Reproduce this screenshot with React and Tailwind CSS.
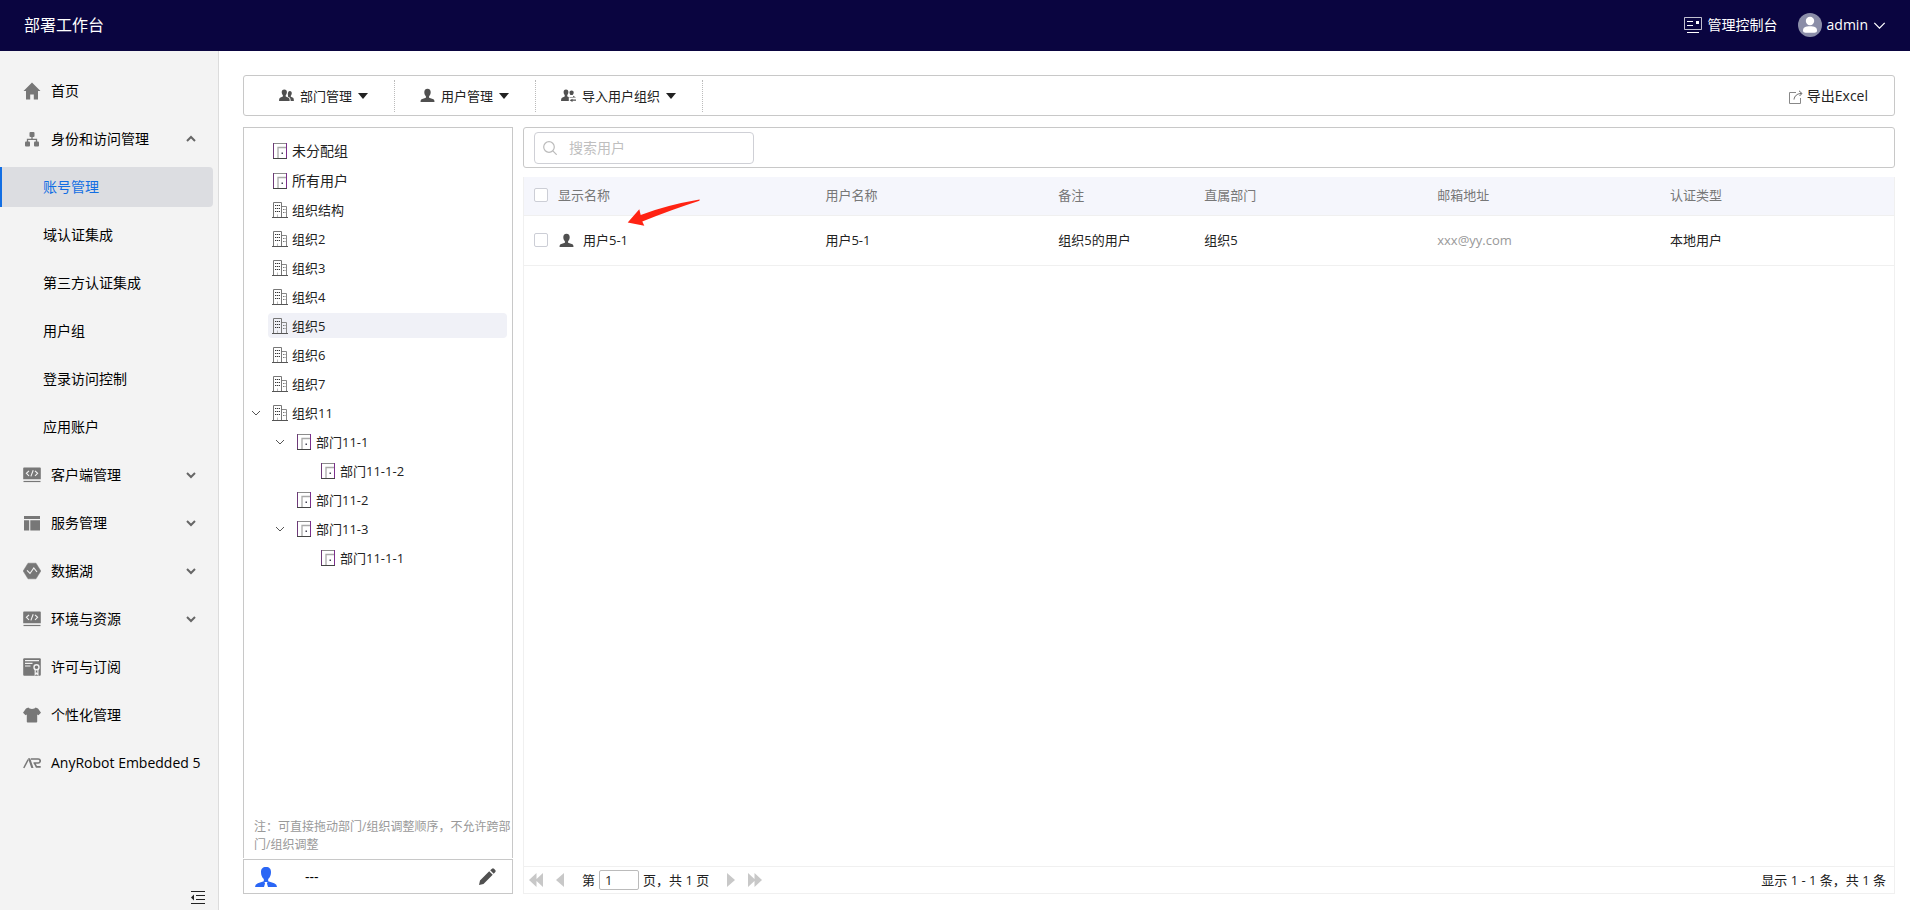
import React from 'react';
import clsx from 'clsx';

const navItems = [
  { label: '首页', icon: HomeIcon },
  {
    label: '身份和访问管理',
    icon: OrgChartIcon,
    open: true,
    children: ['账号管理', '域认证集成', '第三方认证集成', '用户组', '登录访问控制', '应用账户'],
  },
  { label: '客户端管理', icon: CodeIcon, open: false },
  { label: '服务管理', icon: LayoutIcon, open: false },
  { label: '数据湖', icon: HexIcon, open: false },
  { label: '环境与资源', icon: CodeIcon, open: false },
  { label: '许可与订阅', icon: LicenseIcon },
  { label: '个性化管理', icon: ShirtIcon },
  { label: 'AnyRobot Embedded 5', icon: ArIcon },
];

const treeItems = [
  { label: '组织结构', type: 'org' },
  { label: '组织2', type: 'org' },
  { label: '组织3', type: 'org' },
  { label: '组织4', type: 'org' },
  { label: '组织5', type: 'org', selected: true },
  { label: '组织6', type: 'org' },
  { label: '组织7', type: 'org' },
  { label: '组织11', type: 'org', open: true },
  { label: '部门11-1', type: 'dept', level: 1, open: true },
  { label: '部门11-1-2', type: 'dept', level: 2 },
  { label: '部门11-2', type: 'dept', level: 1 },
  { label: '部门11-3', type: 'dept', level: 1, open: true },
  { label: '部门11-1-1', type: 'dept', level: 2 },
];

const indents = ['pl-0', 'pl-6', 'pl-12'];

const users = [
  { name: '用户5-1', account: '用户5-1', remark: '组织5的用户', dept: '组织5', mail: 'xxx@yy.com', auth: '本地用户' },
];

/* Icons */
function HomeIcon() {
  return (
    <svg width="18" height="18" viewBox="0 0 18 18" fill="currentColor">
      <path d="M9 .5 17.500 9H15v8.500h-4.200v-5H7.200v5H3V9H.5z" />
    </svg>
  );
}

function OrgChartIcon() {
  return (
    <svg width="18" height="18" viewBox="0 0 18 18" fill="currentColor">
      <rect x="6.5" y="2" width="5" height="5" rx="1" />
      <rect x="2" y="11.5" width="5" height="5" rx="1" />
      <rect x="11" y="11.5" width="5" height="5" rx="1" />
      <path d="M9 6v3.300M4.500 12V9.300h9V12" fill="none" stroke="currentColor" strokeWidth="1.3" />
    </svg>
  );
}

function CodeIcon() {
  return (
    <svg width="18" height="18" viewBox="0 0 18 18">
      <path d="M1 1.500h16a.8.8 0 0 1 .8.8v11H.2v-11a.8.8 0 0 1 .8-.8z" fill="currentColor" />
      <path d="M.5 15.500h17" stroke="currentColor" strokeWidth="1.2" />
      <path d="M6 4.800 3.400 7.300 6 9.800M12 4.800l2.600 2.500L12 9.800M10.200 4.200 7.900 10.400" fill="none" stroke="#f3f3f3" strokeWidth="1.1" />
    </svg>
  );
}

function LayoutIcon() {
  return (
    <svg width="18" height="18" viewBox="0 0 18 18" fill="currentColor">
      <path d="M1 2h16v3H1zM1 6.300h5.200v10.200H1zM7.300 6.300H17v10.200H7.300z" />
    </svg>
  );
}

function HexIcon() {
  return (
    <svg width="18" height="18" viewBox="0 0 18 18">
      <path d="M5 1.200h8L17.800 9 13 16.800H5L.2 9z" fill="currentColor" stroke="currentColor" strokeLinejoin="round" strokeWidth=".5" />
      <path d="M4 8.400 7 11.500l3.800-5.500 3.200 4" fill="none" stroke="#f3f3f3" strokeWidth="1.1" />
    </svg>
  );
}

function LicenseIcon() {
  return (
    <svg width="18" height="18" viewBox="0 0 18 18">
      <rect x=".2" y=".2" width="17.6" height="17.6" rx="1" fill="currentColor" />
      <path d="M2 2.600h14M2 5.400h7.500M2 8h5.500" stroke="#f3f3f3" strokeWidth="1.1" />
      <circle cx="13.5" cy="9.2" r="2.5" fill="none" stroke="#f3f3f3" strokeWidth="1.4" />
      <path d="M12.200 11.300v5.200l1.300-1.300 1.400 1.300v-5.200" fill="none" stroke="#f3f3f3" strokeWidth="1.2" />
    </svg>
  );
}

function ShirtIcon() {
  return (
    <svg width="18" height="18" viewBox="0 0 18 18" fill="currentColor">
      <path d="M5.400 1.600C6.200 3.500 11.800 3.500 12.600 1.600L15 2.400 18 6.800l-2.600 2.400-1.200-.7v7.300q0 .8-.8.8H4.600q-.8 0-.8-.8V8.500l-1.200.7L0 6.800l3-4.400z" />
    </svg>
  );
}

function ArIcon() {
  return (
    <svg width="18" height="18" viewBox="0 0 18 18" fill="none" stroke="currentColor">
      <path d="M.8 14 5.200 5.500" strokeWidth="1.5" />
      <path d="M5 4.300h2.200L10.500 14H8.300z" fill="currentColor" stroke="none" />
      <path d="M8 5h7.200q2 0 2 1.900T15.200 9H10.500M11.500 9.200l2 3.600h4.200" strokeWidth="1.7" />
    </svg>
  );
}

function Chevron({ up, className, size = 10, stroke = 2 }) {
  return (
    <svg className={className} width={size} height={size} viewBox="0 0 10 10" fill="none" stroke="currentColor" strokeWidth={stroke}>
      <path d={up ? 'M1 7l4-4 4 4' : 'M1 3l4 4 4-4'} />
    </svg>
  );
}

function PersonIcon({ className }) {
  return (
    <svg className={className} width="15" height="15" viewBox="0 0 15 15" fill="currentColor">
      <path d="M7.500.8c2.200 0 3.300 1.500 3.200 3.600-.1 1.700-.8 3-1.600 3.800v1.600l4.400 1.500q1 .5 1 2.700H.5q0-2.200 1-2.700l4.400-1.500V8.200C5.100 7.400 4.400 6.100 4.300 4.400 4.200 2.300 5.300.8 7.500.8z" />
    </svg>
  );
}

function GroupIcon() {
  return (
    <svg width="15" height="15" viewBox="0 0 15 15" fill="currentColor">
      <path d="M5.300 1.500c1.800 0 2.700 1.200 2.600 2.800C7.800 5.700 7.300 6.700 6.700 7.300v1.300l3 1.200q1 .5 1 3.200H0q0-2.700 1-3.200l2.900-1.200V7.300C3.300 6.700 2.800 5.700 2.700 4.300 2.600 2.700 3.500 1.500 5.300 1.500z" />
      <path d="M10.700 3c1.500 0 2.200 1 2.100 2.300-.1 1.100-.5 1.900-1 2.400v1.100l2.300 1q.8.500.8 3.200h-3.200q0-3-1.400-3.700L9 8.700V7.200C8.700 6.500 8.800 3 10.700 3z" />
    </svg>
  );
}

function ImportGroupIcon() {
  return (
    <svg width="15" height="15" viewBox="0 0 15 15" fill="currentColor">
      <path d="M5 1.500c1.700 0 2.500 1.200 2.400 2.700C7.300 5.500 6.800 6.500 6.300 7v1.400l1.500.7V13H0q0-2.800 1-3.300l2.700-1.300V7C3.200 6.500 2.700 5.500 2.600 4.200 2.500 2.700 3.300 1.500 5 1.500z" />
      <path d="M10.600 2.500c1.600 0 2.200 1 2.100 2.200q-.1 1.500-1.100 2.300H9.500q-.9-.8-1-2.300c-.1-1.200.5-2.200 2.100-2.200zM8.500 9h3.600V7.700L15 9.600H8.500zM15 11.600H11.500v-.9L8.600 12.300l2.900 1.700v-1.200H15z" />
    </svg>
  );
}

function DoorIcon() {
  return (
    <svg width="16" height="16" viewBox="0 0 16 16" fill="none">
      <path d="M1.500 15.500V.5h13" stroke="#8c8c8c" />
      <path d="M14.500 0v15.500" stroke="#7b2f8c" />
      <path d="M1.500 0v15.500" stroke="#6d3a78" />
      <path d="M1 15.500h14" stroke="#444" />
      <path d="M6 15V4.500h8" stroke="#aaa" strokeWidth="1.3" />
      <path d="M9.500 9.500h1.500v1.500H9.500z" fill="#445" />
    </svg>
  );
}

function BuildingIcon() {
  return (
    <svg width="16" height="16" viewBox="0 0 16 16" fill="none">
      <path d="M1.500 15V.5h8V15" stroke="#777" />
      <path d="M10 4.500h4.500V15" stroke="#888" />
      <path d="M0 15.500h16" stroke="#555" />
      <path d="M3 3.500h5M3 6.500h5M3 9.500h5" stroke="#333" strokeDasharray="1.3 .7" />
      <path d="M11 7.500h2.500M11 10.500h2.500" stroke="#777" strokeDasharray="1.5 .5" />
      <path d="M5.500 12.500V15" stroke="#bbb" />
    </svg>
  );
}

function Header() {
  return (
    <header className="flex h-[51px] shrink-0 items-center justify-between bg-[#0a0540] px-6 pb-px text-white">
      <h1 className="text-base leading-6">部署工作台</h1>
      <div className="flex items-center gap-5">
        <button type="button" className="flex items-center gap-[6px] text-sm leading-5">
          <svg width="18" height="18" viewBox="0 0 18 18" fill="none" stroke="currentColor">
            <path d="M.5 1.500h17v12H.5z" strokeOpacity=".75" />
            <path d="M3 5.500h6M3 9.500h6M3 16.500h12" strokeWidth="1.2" />
            <path d="M12 5h3v3h-3z" fill="currentColor" stroke="none" />
          </svg>
          管理控制台
        </button>
        <button type="button" className="flex items-center gap-[5px] text-sm leading-5">
          <svg width="24" height="24" viewBox="0 0 24 24">
            <circle cx="12" cy="12" r="12" fill="#8b8ea8" />
            <circle cx="12" cy="8" r="4.2" fill="#fff" />
            <path d="M5 17.500c0-3.200 2.500-4.300 7-4.300s7 1.100 7 4.300c0 1.700-1 2.200-2.500 2.200h-9C6 19.700 5 19.200 5 17.500z" fill="#fff" />
          </svg>
          admin
          <Chevron size={13} stroke={1} />
        </button>
      </div>
    </header>
  );
}

function Sidebar() {
  return (
    <aside className="flex w-[219px] shrink-0 flex-col justify-between border-r border-[#dcdcdc] bg-[#f3f3f3] pt-4 text-sm leading-5 text-black">
      <nav>
        {navItems.map((item) => {
          const Icon = item.icon;
          return (
            <div key={item.label}>
              <a href="#" className="flex h-12 items-center pl-[23px] pr-[22px]">
                <span className="text-[#777]">
                  <Icon />
                </span>
                <span className="ml-[10px] flex-1 whitespace-nowrap">{item.label}</span>
                {item.open !== undefined && <Chevron up={item.open} className="text-[#666]" />}
              </a>
              {item.children && (
                <div className="flex flex-col gap-2 py-1 pr-[5px]">
                  {item.children.map((child, index) => (
                    <a
                      key={child}
                      href="#"
                      className={clsx(
                        'flex h-10 items-center rounded-r-sm border-l-2 pl-[41px]',
                        index === 0 ? 'border-[#126ee3] bg-[#dcdde1] text-[#126ee3]' : 'border-transparent'
                      )}
                    >
                      {child}
                    </a>
                  ))}
                </div>
              )}
            </div>
          );
        })}
      </nav>
      <button type="button" aria-label="收起" className="mr-3 mb-1 self-end">
        <svg width="16" height="16" viewBox="0 0 16 16" fill="none" stroke="#222">
          <path d="M1 1.500h14M6 5.500h9M6 9.500h9M1 13.500h14" strokeWidth="1.2" />
          <path d="M4 4.500v6L1 7.500z" fill="#222" stroke="none" />
        </svg>
      </button>
    </aside>
  );
}

function ToolButton({ icon, label }) {
  return (
    <button
      type="button"
      className="flex h-8 items-center gap-[6px] border-r border-dotted border-[#bbb] pr-[26px] pl-[25px] text-[#222]"
    >
      <span className="text-[#505050]">{icon}</span>
      {label}
      <svg width="10" height="6" viewBox="0 0 10 6" fill="#222">
        <path d="M0 0h10L5 6z" />
      </svg>
    </button>
  );
}

function Toolbar() {
  return (
    <div className="flex h-[41px] shrink-0 items-center rounded-[3px] border border-[#c8c8c8] pl-[10px] pr-[26px]">
      <ToolButton icon={<GroupIcon />} label="部门管理" />
      <ToolButton icon={<PersonIcon />} label="用户管理" />
      <ToolButton icon={<ImportGroupIcon />} label="导入用户组织" />
      <button type="button" className="ml-auto flex items-center gap-1 text-sm leading-5 text-[#222]">
        <svg className="mt-[2px]" width="14" height="14" viewBox="0 0 14 14" fill="none" stroke="#888">
          <path d="M7 2.500H.5v11h11V8" />
          <path d="M5 9.500C5.500 6 8 3.500 12.500 3.500M10 .8l3 2.700L10.500 6" stroke="#666" />
        </svg>
        导出Excel
      </button>
    </div>
  );
}

function TreeRow({ item }) {
  return (
    <li className={clsx('relative', indents[item.level || 0])}>
      {item.open && (
        <button type="button" aria-label="展开" className="absolute top-2 -ml-[17px] text-[#555]">
          <Chevron stroke={1} />
        </button>
      )}
      <a
        href="#"
        className={clsx('flex h-[25px] items-center gap-1 rounded-sm pl-1', item.selected && 'bg-[#f0f1f7]')}
      >
        {item.type === 'org' ? <BuildingIcon /> : <DoorIcon />}
        {item.label}
      </a>
    </li>
  );
}

function TreePanel() {
  return (
    <section className="flex w-[270px] shrink-0 flex-col gap-px">
      <div className="flex flex-1 flex-col justify-between border-x border-t border-[#c8c8c8] text-[#222]">
        <div className="pt-2 pr-[5px] pl-6">
          <ul className="text-sm leading-5">
            {['未分配组', '所有用户'].map((label) => (
              <li key={label}>
                <a href="#" className="flex h-[30px] items-center gap-1 pl-1">
                  <DoorIcon />
                  {label}
                </a>
              </li>
            ))}
          </ul>
          <ul className="mt-px flex flex-col gap-1">
            {treeItems.map((item) => (
              <TreeRow key={item.label} item={item} />
            ))}
          </ul>
        </div>
        <p className="pb-1 pl-[10px] text-xs leading-[18px] text-[#999]">
          注：可直接拖动部门/组织调整顺序，不允许跨部门/组织调整
        </p>
      </div>
      <div className="flex h-[35px] shrink-0 items-center border border-[#c8c8c8] pr-4 pl-[11px] text-sm">
        <svg width="22" height="20" viewBox="0 0 22 20" fill="#2a66f5">
          <path d="M11 0c3.500 0 5 2 5 5 0 3-1 5.500-2.800 7v2.300l6 2q2.800 1 2.800 3.700H13l-1-3.500.5-1.500h-3l.5 1.500L9 20H0q0-2.700 2.800-3.700l6-2V12C7 10.500 6 8 6 5c0-3 1.500-5 5-5z" />
        </svg>
        <span className="ml-7 flex-1">---</span>
        <button type="button" aria-label="编辑">
          <svg width="18" height="18" viewBox="0 0 18 18" fill="#505050">
            <path d="M1 17l1-4.500L11.200 3.300l3.500 3.500L5.500 16zM12.200 2.300 14 .7q1-.8 2 .1l1.200 1.200q.9 1 .1 2l-1.600 1.800z" />
          </svg>
        </button>
      </div>
    </section>
  );
}

function Checkbox({ label }) {
  return (
    <input
      type="checkbox"
      aria-label={label}
      className="size-[14px] shrink-0 appearance-none rounded-xs border border-[#ccced6] bg-white checked:bg-[#126ee3]"
    />
  );
}

function RedArrow() {
  return (
    <svg className="pointer-events-none absolute -top-[31px] left-11" width="73" height="28" viewBox="0 0 73 28">
      <path d="M.7 23.500 12.300 10.300l1.400 5.600Q40 6 72.500.5q.8.600-.8 1.500Q45 10.500 15.300 22.500l2 4.200z" fill="#ff2313" />
    </svg>
  );
}

function UserTable() {
  return (
    <table className="w-full table-fixed text-left">
      <colgroup>
        <col />
        <col className="w-[17%]" />
        <col className="w-[146px]" />
        <col className="w-[17%]" />
        <col className="w-[17%]" />
        <col className="w-[17%]" />
      </colgroup>
      <thead className="bg-[#f5f6fc] text-[#777]">
        <tr className="h-[38px] border-b border-[#f0f0f0] [&>th]:pb-[2px] [&>th]:pl-[9px] [&>th]:font-normal">
          <th>
            <div className="flex items-center gap-[10px] pl-px">
              <Checkbox label="全选" />
              显示名称
            </div>
          </th>
          <th>用户名称</th>
          <th>备注</th>
          <th>直属部门</th>
          <th>邮箱地址</th>
          <th>认证类型</th>
        </tr>
      </thead>
      <tbody className="text-[#222]">
        {users.map((user) => (
          <tr key={user.name} className="h-[50px] border-b border-[#f0f0f0] [&>td]:pl-[9px]">
            <td>
              <div className="flex items-center pl-px">
                <Checkbox label={user.name} />
                <PersonIcon className="ml-[11px] text-[#505050]" />
                <span className="relative ml-[9px]">
                  {user.name}
                  <RedArrow />
                </span>
              </div>
            </td>
            <td>{user.account}</td>
            <td>{user.remark}</td>
            <td>{user.dept}</td>
            <td className="text-[#999]">{user.mail}</td>
            <td>{user.auth}</td>
          </tr>
        ))}
      </tbody>
    </table>
  );
}

function PageArrow({ double, flip, label }) {
  return (
    <button type="button" aria-label={label} className={clsx('text-[#c8c8c8]', flip && 'rotate-180')}>
      <svg width={double ? 14 : 8} height="14" viewBox={double ? '0 0 14 14' : '0 0 8 14'} fill="currentColor">
        <path d={double ? 'M7.500 0v14L0 7zM14 0v14L6.500 7z' : 'M8 0v14L0 7z'} />
      </svg>
    </button>
  );
}

function Pagination() {
  return (
    <footer className="flex h-[27px] shrink-0 items-center border-t border-[#f0f0f0] pr-2 pl-[5px] text-[#222]">
      <div className="flex items-center gap-[13px]">
        <PageArrow double label="首页" />
        <PageArrow label="上一页" />
      </div>
      <label className="ml-[18px] flex items-center gap-1 whitespace-nowrap">
        第
        <input
          type="text"
          defaultValue="1"
          className="h-5 w-10 rounded-xs border border-[#bbb] px-[5px] text-[13px] leading-4"
        />
        页，共 1 页
      </label>
      <div className="ml-[18px] flex items-center gap-[13px]">
        <PageArrow flip label="下一页" />
        <PageArrow double flip label="末页" />
      </div>
      <span className="ml-auto">显示 1 - 1 条，共 1 条</span>
    </footer>
  );
}

function UserPanel() {
  return (
    <section className="flex min-w-0 flex-1 flex-col">
      <div className="flex h-[41px] shrink-0 items-center rounded-[3px] border border-[#c8c8c8] px-[10px]">
        <label className="flex h-8 w-[220px] items-center gap-3 rounded border border-[#cfd0d6] px-2">
          <svg className="shrink-0" width="14" height="14" viewBox="0 0 14 14" fill="none" stroke="#bbb" strokeWidth="1.2">
            <circle cx="6" cy="6" r="5.3" />
            <path d="M9.800 9.800 13.700 13.700" />
          </svg>
          <input
            type="text"
            aria-label="搜索用户"
            placeholder="搜索用户"
            className="w-full min-w-0 text-sm leading-5 outline-none placeholder:text-[#bfbfbf]"
          />
        </label>
      </div>
      <div className="mt-[9px] flex flex-1 flex-col justify-between border-x border-b border-[#f0f0f0]">
        <UserTable />
        <Pagination />
      </div>
    </section>
  );
}

export default function App() {
  return (
    <div className="flex min-h-screen flex-col bg-white font-['Open_Sans','Noto_Sans_CJK_SC',sans-serif] text-[13px] leading-5">
      <Header />
      <div className="flex flex-1">
        <Sidebar />
        <main className="flex min-w-0 flex-1 flex-col gap-[11px] pt-6 pr-[15px] pb-4 pl-6">
          <Toolbar />
          <div className="flex flex-1 gap-[10px]">
            <TreePanel />
            <UserPanel />
          </div>
        </main>
      </div>
    </div>
  );
}
